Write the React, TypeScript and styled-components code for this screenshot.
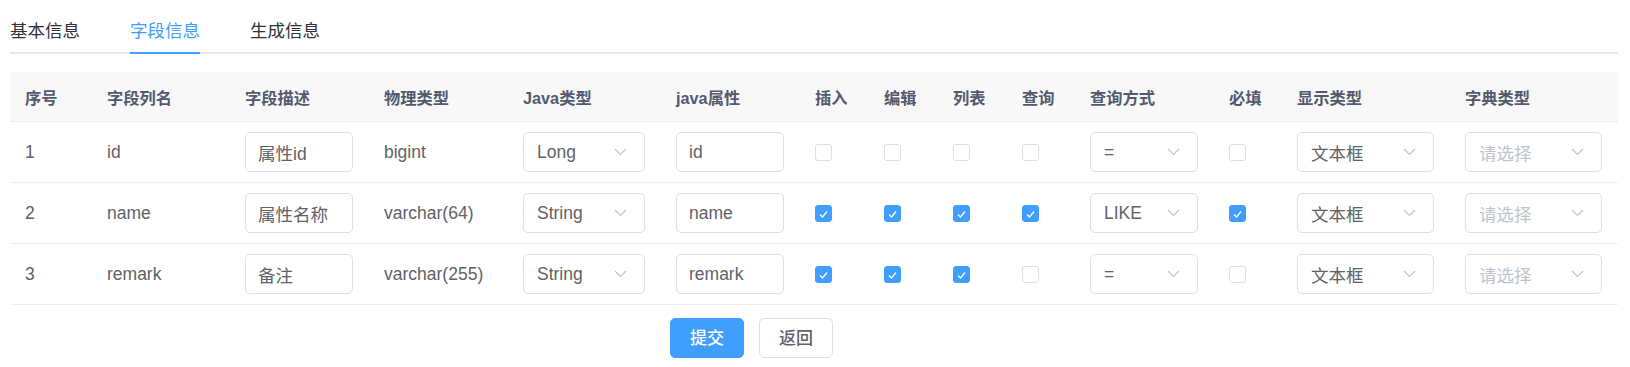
import React from "react";
import styled, { createGlobalStyle } from "styled-components";

const GlobalStyle = createGlobalStyle`
  html, body {
    margin: 0;
    padding: 0;
    background: #ffffff;
  }
  body {
    font-family: "Liberation Sans", "Noto Sans CJK SC", sans-serif;
    color: #606266;
  }
  * {
    box-sizing: border-box;
  }
`;

const COLUMNS =
  "82px 138px 139px 139px 153px 139px 69px 69px 69px 68px 139px 68px 168px 168px";

const Page = styled.div`
  width: 1608px;
  margin-left: 10px;
`;

/* tabs */
const TabBar = styled.div`
  display: flex;
  padding-top: 11px;
  border-bottom: 2px solid #e4e7ed;
  margin-bottom: 18px;
`;

const Tab = styled.div`
  padding: 0 25px;
  margin-bottom: -2px;

  &:first-child {
    padding-left: 0;
  }
`;

const TabLabel = styled.div<{ $active?: boolean }>`
  height: 43px;
  line-height: 41px;
  font-size: 17.5px;
  color: ${({ $active }) => ($active ? "#409eff" : "#303133")};
  border-bottom: 2px solid
    ${({ $active }) => ($active ? "#409eff" : "transparent")};
  white-space: nowrap;
`;

/* table */
const HeadRow = styled.div`
  display: grid;
  grid-template-columns: ${COLUMNS};
  align-items: center;
  height: 50px;
  background: #f8f8f9;
  border-bottom: 1px solid #ebeef5;
`;

const HeadCell = styled.div`
  padding-left: 15px;
  font-size: 16.25px;
  font-weight: 700;
  color: #515a6e;
  white-space: nowrap;
`;

const Row = styled.div`
  display: grid;
  grid-template-columns: ${COLUMNS};
  align-items: center;
  height: 61px;
  border-bottom: 1px solid #ebeef5;
`;

const Cell = styled.div`
  padding: 0 16px 0 15px;
  font-size: 17.5px;
  color: #606266;
  white-space: nowrap;
`;

const TextInput = styled.input`
  display: block;
  width: 100%;
  height: 40px;
  padding: 0 12px;
  border: 1px solid #dcdfe6;
  border-radius: 5px;
  background: #ffffff;
  font-family: inherit;
  font-size: 17.5px;
  color: #606266;
  outline: none;
`;

const SelectBox = styled.div`
  display: flex;
  align-items: center;
  justify-content: space-between;
  height: 40px;
  padding: 0 17px 0 13px;
  border: 1px solid #dcdfe6;
  border-radius: 5px;
  background: #ffffff;
`;

const SelectText = styled.span<{ $placeholder?: boolean }>`
  font-size: 17.5px;
  color: ${({ $placeholder }) => ($placeholder ? "#c0c4cc" : "#606266")};
`;

const Check = styled.span<{ $checked?: boolean }>`
  display: block;
  width: 17px;
  height: 17px;
  border-radius: 3px;
  border: 1px solid ${({ $checked }) => ($checked ? "#409eff" : "#dcdfe6")};
  background: ${({ $checked }) => ($checked ? "#409eff" : "#ffffff")};
  color: #ffffff;
`;

/* footer buttons */
const Actions = styled.div`
  display: flex;
  justify-content: center;
  gap: 15px;
  margin: 13px 0 0 -125px;
`;

const Button = styled.button<{ $primary?: boolean }>`
  height: 40px;
  padding: 0 19px;
  border-radius: 5px;
  font-family: inherit;
  font-size: 17px;
  font-weight: 500;
  line-height: 1;
  cursor: pointer;
  border: 1px solid ${({ $primary }) => ($primary ? "#409eff" : "#dcdfe6")};
  background: ${({ $primary }) => ($primary ? "#409eff" : "#ffffff")};
  color: ${({ $primary }) => ($primary ? "#ffffff" : "#606266")};
`;

const Chevron = () => (
  <svg width="13" height="8" viewBox="0 0 13 8" fill="none">
    <polyline
      points="1,1 6.5,6.5 12,1"
      stroke="#c0c4cc"
      strokeWidth="1.2"
      fill="none"
    />
  </svg>
);

const Checkbox = ({ checked }: { checked?: boolean }) => (
  <Check $checked={checked}>
    {checked && (
      <svg width="15" height="15" viewBox="0 0 15 15">
        <polyline
          points="4,7.5 6.5,10 11,4.5"
          stroke="#ffffff"
          strokeWidth="1.3"
          fill="none"
        />
      </svg>
    )}
  </Check>
);

const Select = ({ value, placeholder }: { value?: string; placeholder?: string }) => (
  <SelectBox>
    <SelectText $placeholder={!value}>{value || placeholder}</SelectText>
    <Chevron />
  </SelectBox>
);

type Field = {
  name: string;
  comment: string;
  dbType: string;
  javaType: string;
  javaField: string;
  insert: boolean;
  edit: boolean;
  list: boolean;
  query: boolean;
  queryType: string;
  required: boolean;
  htmlType: string;
};

const fields: Field[] = [
  {
    name: "id",
    comment: "属性id",
    dbType: "bigint",
    javaType: "Long",
    javaField: "id",
    insert: false,
    edit: false,
    list: false,
    query: false,
    queryType: "=",
    required: false,
    htmlType: "文本框",
  },
  {
    name: "name",
    comment: "属性名称",
    dbType: "varchar(64)",
    javaType: "String",
    javaField: "name",
    insert: true,
    edit: true,
    list: true,
    query: true,
    queryType: "LIKE",
    required: true,
    htmlType: "文本框",
  },
  {
    name: "remark",
    comment: "备注",
    dbType: "varchar(255)",
    javaType: "String",
    javaField: "remark",
    insert: true,
    edit: true,
    list: true,
    query: false,
    queryType: "=",
    required: false,
    htmlType: "文本框",
  },
];

const headers = [
  "序号",
  "字段列名",
  "字段描述",
  "物理类型",
  "Java类型",
  "java属性",
  "插入",
  "编辑",
  "列表",
  "查询",
  "查询方式",
  "必填",
  "显示类型",
  "字典类型",
];

export default function App() {
  return (
    <>
      <GlobalStyle />
      <Page>
        <TabBar>
          <Tab>
            <TabLabel>基本信息</TabLabel>
          </Tab>
          <Tab>
            <TabLabel $active>字段信息</TabLabel>
          </Tab>
          <Tab>
            <TabLabel>生成信息</TabLabel>
          </Tab>
        </TabBar>

        <HeadRow>
          {headers.map((h) => (
            <HeadCell key={h}>{h}</HeadCell>
          ))}
        </HeadRow>
        {fields.map((f, i) => (
          <Row key={f.name}>
            <Cell>{i + 1}</Cell>
            <Cell>{f.name}</Cell>
            <Cell>
              <TextInput readOnly defaultValue={f.comment} />
            </Cell>
            <Cell>{f.dbType}</Cell>
            <Cell>
              <Select value={f.javaType} />
            </Cell>
            <Cell>
              <TextInput readOnly defaultValue={f.javaField} />
            </Cell>
            <Cell>
              <Checkbox checked={f.insert} />
            </Cell>
            <Cell>
              <Checkbox checked={f.edit} />
            </Cell>
            <Cell>
              <Checkbox checked={f.list} />
            </Cell>
            <Cell>
              <Checkbox checked={f.query} />
            </Cell>
            <Cell>
              <Select value={f.queryType} />
            </Cell>
            <Cell>
              <Checkbox checked={f.required} />
            </Cell>
            <Cell>
              <Select value={f.htmlType} />
            </Cell>
            <Cell>
              <Select placeholder="请选择" />
            </Cell>
          </Row>
        ))}

        <Actions>
          <Button $primary>提交</Button>
          <Button>返回</Button>
        </Actions>
      </Page>
    </>
  );
}
